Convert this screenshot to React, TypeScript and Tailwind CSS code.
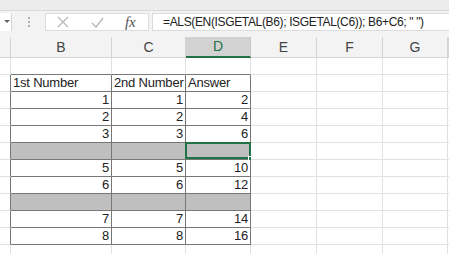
import React from 'react';

const colW = ['w-[11px]', 'w-[101px]', 'w-[74px]', 'w-[65px]', 'w-[66px]', 'w-[66px]', 'w-[65px]', 'w-[1px]'];
const letters = ['', 'B', 'C', 'D', 'E', 'F', 'G', ''];

type Row = { kind: 'blank' } | { kind: 'head' } | { kind: 'gray' } | { kind: 'num'; a: number; b: number; c: number };

const rows: Row[] = [
  { kind: 'blank' },
  { kind: 'head' },
  { kind: 'num', a: 1, b: 1, c: 2 },
  { kind: 'num', a: 2, b: 2, c: 4 },
  { kind: 'num', a: 3, b: 3, c: 6 },
  { kind: 'gray' },
  { kind: 'num', a: 5, b: 5, c: 10 },
  { kind: 'num', a: 6, b: 6, c: 12 },
  { kind: 'gray' },
  { kind: 'num', a: 7, b: 7, c: 14 },
  { kind: 'num', a: 8, b: 8, c: 16 },
  { kind: 'blank' },
];

function Cell({ row, ri, ci }: { row: Row; ri: number; ci: number }) {
  const inTable = ri >= 1 && ri <= 10;
  const tableCol = ci >= 1 && ci <= 3;
  let border = 'border-r border-b border-r-[#e1e1e1] border-b-[#e1e1e1]';
  if (inTable && tableCol) border = 'border-r border-b border-r-[#777777] border-b-[#777777]';
  else if (ri === 0 && tableCol) border = 'border-r border-b border-r-[#e1e1e1] border-b-[#777777]';
  else if (inTable && ci === 0) border = 'border-r border-b border-r-[#777777] border-b-[#e1e1e1]';

  const fill = inTable && tableCol && row.kind === 'gray' ? 'bg-[#bfbfbf]' : 'bg-white';
  const selected = ri === 5 && ci === 3;

  let content: React.ReactNode = null;
  let align = 'justify-end pr-[2px]';
  if (tableCol && row.kind === 'head') {
    content = ['1st Number', '2nd Number', 'Answer'][ci - 1];
    align = 'justify-start pl-[2px]';
  } else if (tableCol && row.kind === 'num') {
    content = [row.a, row.b, row.c][ci - 1];
  }

  return (
    <div className={`relative flex h-[17px] shrink-0 items-end overflow-visible whitespace-nowrap leading-[16px] ${colW[ci]} ${border} ${fill} ${align}`}>
      {content}
      {selected && (
        <>
          <div className="absolute -left-[1px] -top-[1px] h-[17px] w-[66px] border-2 border-[#217346]" />
          <div className="absolute -bottom-[2px] -right-[3px] h-[5px] w-[5px] border border-white bg-[#217346]" />
        </>
      )}
    </div>
  );
}

export default function App() {
  return (
    <div className="h-[254px] w-[449px] overflow-hidden bg-white font-['Liberation_Sans',sans-serif] text-[13px] tracking-[-0.2px] text-[#222]">
      <div className="h-[11px] border-b border-[#dadada] bg-[#ececec]" />

      {/* formula bar */}
      <div className="flex h-[26px] items-start bg-[#f3f3f3] pt-[2px]">
        <div className="flex h-[18px] w-[12px] shrink-0 items-center border-r border-[#d6d6d6] bg-white pl-[4px]">
          <svg width="6" height="4" viewBox="0 0 6 4"><path d="M0 0h6L3 3z" fill="#666" /></svg>
        </div>
        <div className="flex h-[18px] w-[33px] shrink-0 items-center justify-center">
          <div className="flex flex-col gap-[2px]">
            <span className="h-[2px] w-[2px] bg-[#b0b0b0]" />
            <span className="h-[2px] w-[2px] bg-[#b0b0b0]" />
            <span className="h-[2px] w-[2px] bg-[#b0b0b0]" />
          </div>
        </div>
        <div className="flex h-[18px] w-[104px] shrink-0 items-center border border-[#dcdcdc] bg-white">
          <svg className="ml-[11px]" width="12" height="12" viewBox="0 0 12 12">
            <path d="M1 1l10 10M11 1L1 11" stroke="#b8b8b8" strokeWidth="1.3" />
          </svg>
          <svg className="ml-[22px]" width="13" height="11" viewBox="0 0 13 11">
            <path d="M1 6l4 4 7-9" stroke="#b8b8b8" strokeWidth="1.4" fill="none" />
          </svg>
          <span className="ml-[21px] font-['Liberation_Serif',serif] text-[15px] italic text-[#555]">fx</span>
        </div>
        <div className="ml-[3px] flex h-[18px] min-w-0 flex-1 items-center overflow-hidden whitespace-nowrap border border-r-0 border-[#dcdcdc] bg-white pl-[10px] text-[12px] tracking-[-0.35px]">
          =ALS(EN(ISGETAL(B6); ISGETAL(C6)); B6+C6; &quot; &quot;)
        </div>
      </div>

      {/* column headers */}
      <div className="flex h-[21px] bg-[#f3f3f3] text-[14px] tracking-normal text-[#444]">
        {letters.map((l, i) => (
          <div
            key={i}
            className={`flex shrink-0 items-center justify-center ${colW[i]} ${
              i === 3
                ? 'border-b-2 border-r border-b-[#217346] border-r-[#c8c8c8] bg-[#d2d2d2] text-[#217346]'
                : 'border-r border-b border-[#d4d4d4]'
            }`}
          >
            {l}
          </div>
        ))}
      </div>

      {rows.map((row, ri) => (
        <div key={ri} className="flex">
          {colW.map((_, ci) => (
            <Cell key={ci} row={row} ri={ri} ci={ci} />
          ))}
        </div>
      ))}
    </div>
  );
}
